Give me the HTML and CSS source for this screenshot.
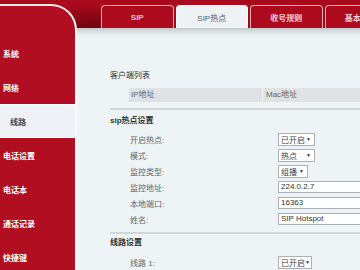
FILE: index.html
```html
<!DOCTYPE html>
<html>
<head>
<meta charset="utf-8">
<link rel="stylesheet" href="styles.css">
</head>
<body>
<div class="app">
  <aside class="sidebar">
    <nav class="menu">
      <div class="item">系统</div>
      <div class="item">网络</div>
      <div class="item active">线路</div>
      <div class="item">电话设置</div>
      <div class="item">电话本</div>
      <div class="item">通话记录</div>
      <div class="item">快捷键</div>
    </nav>
  </aside>
  <div class="main">
    <div class="tabs">
      <div class="tab">SIP</div>
      <div class="tab active">SIP热点</div>
      <div class="tab">收号规则</div>
      <div class="tab">基本设置</div>
    </div>
    <div class="content">
      <section class="block">
        <h3 class="title plain">客户端列表</h3>
        <div class="thead"><span class="c1">IP地址</span><span class="c2">Mac地址</span></div>
      </section>
      <section class="block sec">
        <h3 class="title">sip热点设置</h3>
        <div class="row"><span class="label">开启热点:</span><div class="select w37"><span>已开启</span><span class="arrow">▼</span></div></div>
        <div class="row"><span class="label">模式:</span><div class="select w37"><span>热点</span><span class="arrow">▼</span></div></div>
        <div class="row"><span class="label">监控类型:</span><div class="select w30"><span>组播</span><span class="arrow">▼</span></div></div>
        <div class="row"><span class="label">监控地址:</span><div class="input">224.0.2.7</div></div>
        <div class="row"><span class="label">本地端口:</span><div class="input">16363</div></div>
        <div class="row"><span class="label">姓名:</span><div class="input">SIP Hotspot</div></div>
      </section>
      <section class="block sec sec2">
        <h3 class="title">线路设置</h3>
        <div class="row row2"><span class="label">线路 1:</span><div class="select w34"><span>已开启</span><span class="arrow">▼</span></div></div>
      </section>
    </div>
  </div>
</div>
</body>
</html>
```

FILE: styles.css
```css
html, body {
  margin: 0;
  padding: 0;
}
body {
  font-family: "Liberation Sans", "Noto Sans CJK SC", sans-serif;
  font-size: 8px;
  background: #eef3f6;
}
.app {
  width: 360px;
  height: 270px;
  overflow: hidden;
  display: grid;
  grid-template-columns: 77px 1fr;
  background:
    radial-gradient(ellipse 70px 22px at 92px 28px, rgba(70, 0, 8, 0.55), rgba(70, 0, 8, 0) 100%),
    linear-gradient(180deg, #a80b1d 0, #9c0919 28px, transparent 28px),
    #eef3f6;
}
.sidebar {
  margin-top: 4px;
  background: #b20e21;
  border-top: 2px solid #fbe9ec;
  border-right: 2px solid #f7f9fa;
  border-top-right-radius: 26px;
  padding-top: 30px;
}
.menu {
  display: flex;
  flex-direction: column;
}
.item {
  height: 34px;
  box-sizing: border-box;
  display: flex;
  align-items: center;
  padding-left: 3px;
  color: #fff;
  font-weight: bold;
  white-space: nowrap;
}
.item.active {
  background: #eef2f7;
  color: #3d4b5c;
  padding-left: 10px;
  border-top: 1px solid #fff;
  border-bottom: 1px solid #fff;
}
.main {
  display: flex;
  flex-direction: column;
  min-width: 0;
  overflow: hidden;
}
.tabs {
  height: 28px;
  box-sizing: border-box;
  padding: 5px 0 0 24px;
  display: flex;
  gap: 2px;
  flex: none;
  overflow: hidden;
}
.tab {
  flex: none;
  width: 72.5px;
  box-sizing: border-box;
  border: 1px solid #e6aeb6;
  border-bottom: none;
  border-radius: 4px 4px 0 0;
  background: #ae0a1d;
  color: #f7cdd3;
  font-weight: bold;
  display: flex;
  align-items: center;
  justify-content: center;
  white-space: nowrap;
}
.tab.active {
  background: #eef2f5;
  color: #5a6068;
  font-weight: normal;
  border-color: #fdfdfd;
}
.content {
  flex: 1;
  background: linear-gradient(180deg, #c3c8cc 0, #dde2e5 4px, #eef3f6 8px);
  padding: 42px 0 0 33px;
}
.title {
  margin: 0;
  line-height: 12px;
  font-size: 8px;
  font-weight: bold;
  color: #333;
}
.title.plain {
  font-weight: normal;
}
.thead {
  margin: 6px 0 0 19px;
  height: 14px;
  background: #dfe1e2;
  display: flex;
  align-items: stretch;
  color: #666;
  white-space: nowrap;
  line-height: 14px;
}
.thead .c1 {
  width: 131px;
  padding-left: 2px;
  border-right: 1px solid #f3f5f6;
}
.thead .c2 {
  padding-left: 3px;
}
.sec {
  margin-top: 6px;
  border-top: 2px solid #d3d7d9;
  padding-top: 5px;
}
.sec2 {
  margin-top: 5px;
  padding-top: 3px;
}
.row {
  display: flex;
  align-items: center;
  height: 16px;
  padding-left: 20px;
  white-space: nowrap;
}
.sec .title + .row {
  margin-top: 4px;
}
.sec2 .title + .row {
  margin-top: 5px;
}
.label {
  width: 148px;
  flex: none;
  color: #666;
}
.select {
  box-sizing: border-box;
  height: 13px;
  border: 1px solid #aab0b4;
  background: #fff;
  display: flex;
  align-items: center;
  justify-content: space-between;
  padding: 0 3px 0 2px;
  color: #444;
  flex: none;
  white-space: nowrap;
}
.w37 { width: 37px; }
.w34 { width: 34px; }
.w30 { width: 30px; }
.arrow {
  font-size: 5px;
  color: #333;
}
.input {
  box-sizing: border-box;
  width: 110px;
  height: 12px;
  border: 1px solid #aab0b4;
  background: #fff;
  padding-left: 2px;
  line-height: 10px;
  color: #333;
  flex: none;
}
```
